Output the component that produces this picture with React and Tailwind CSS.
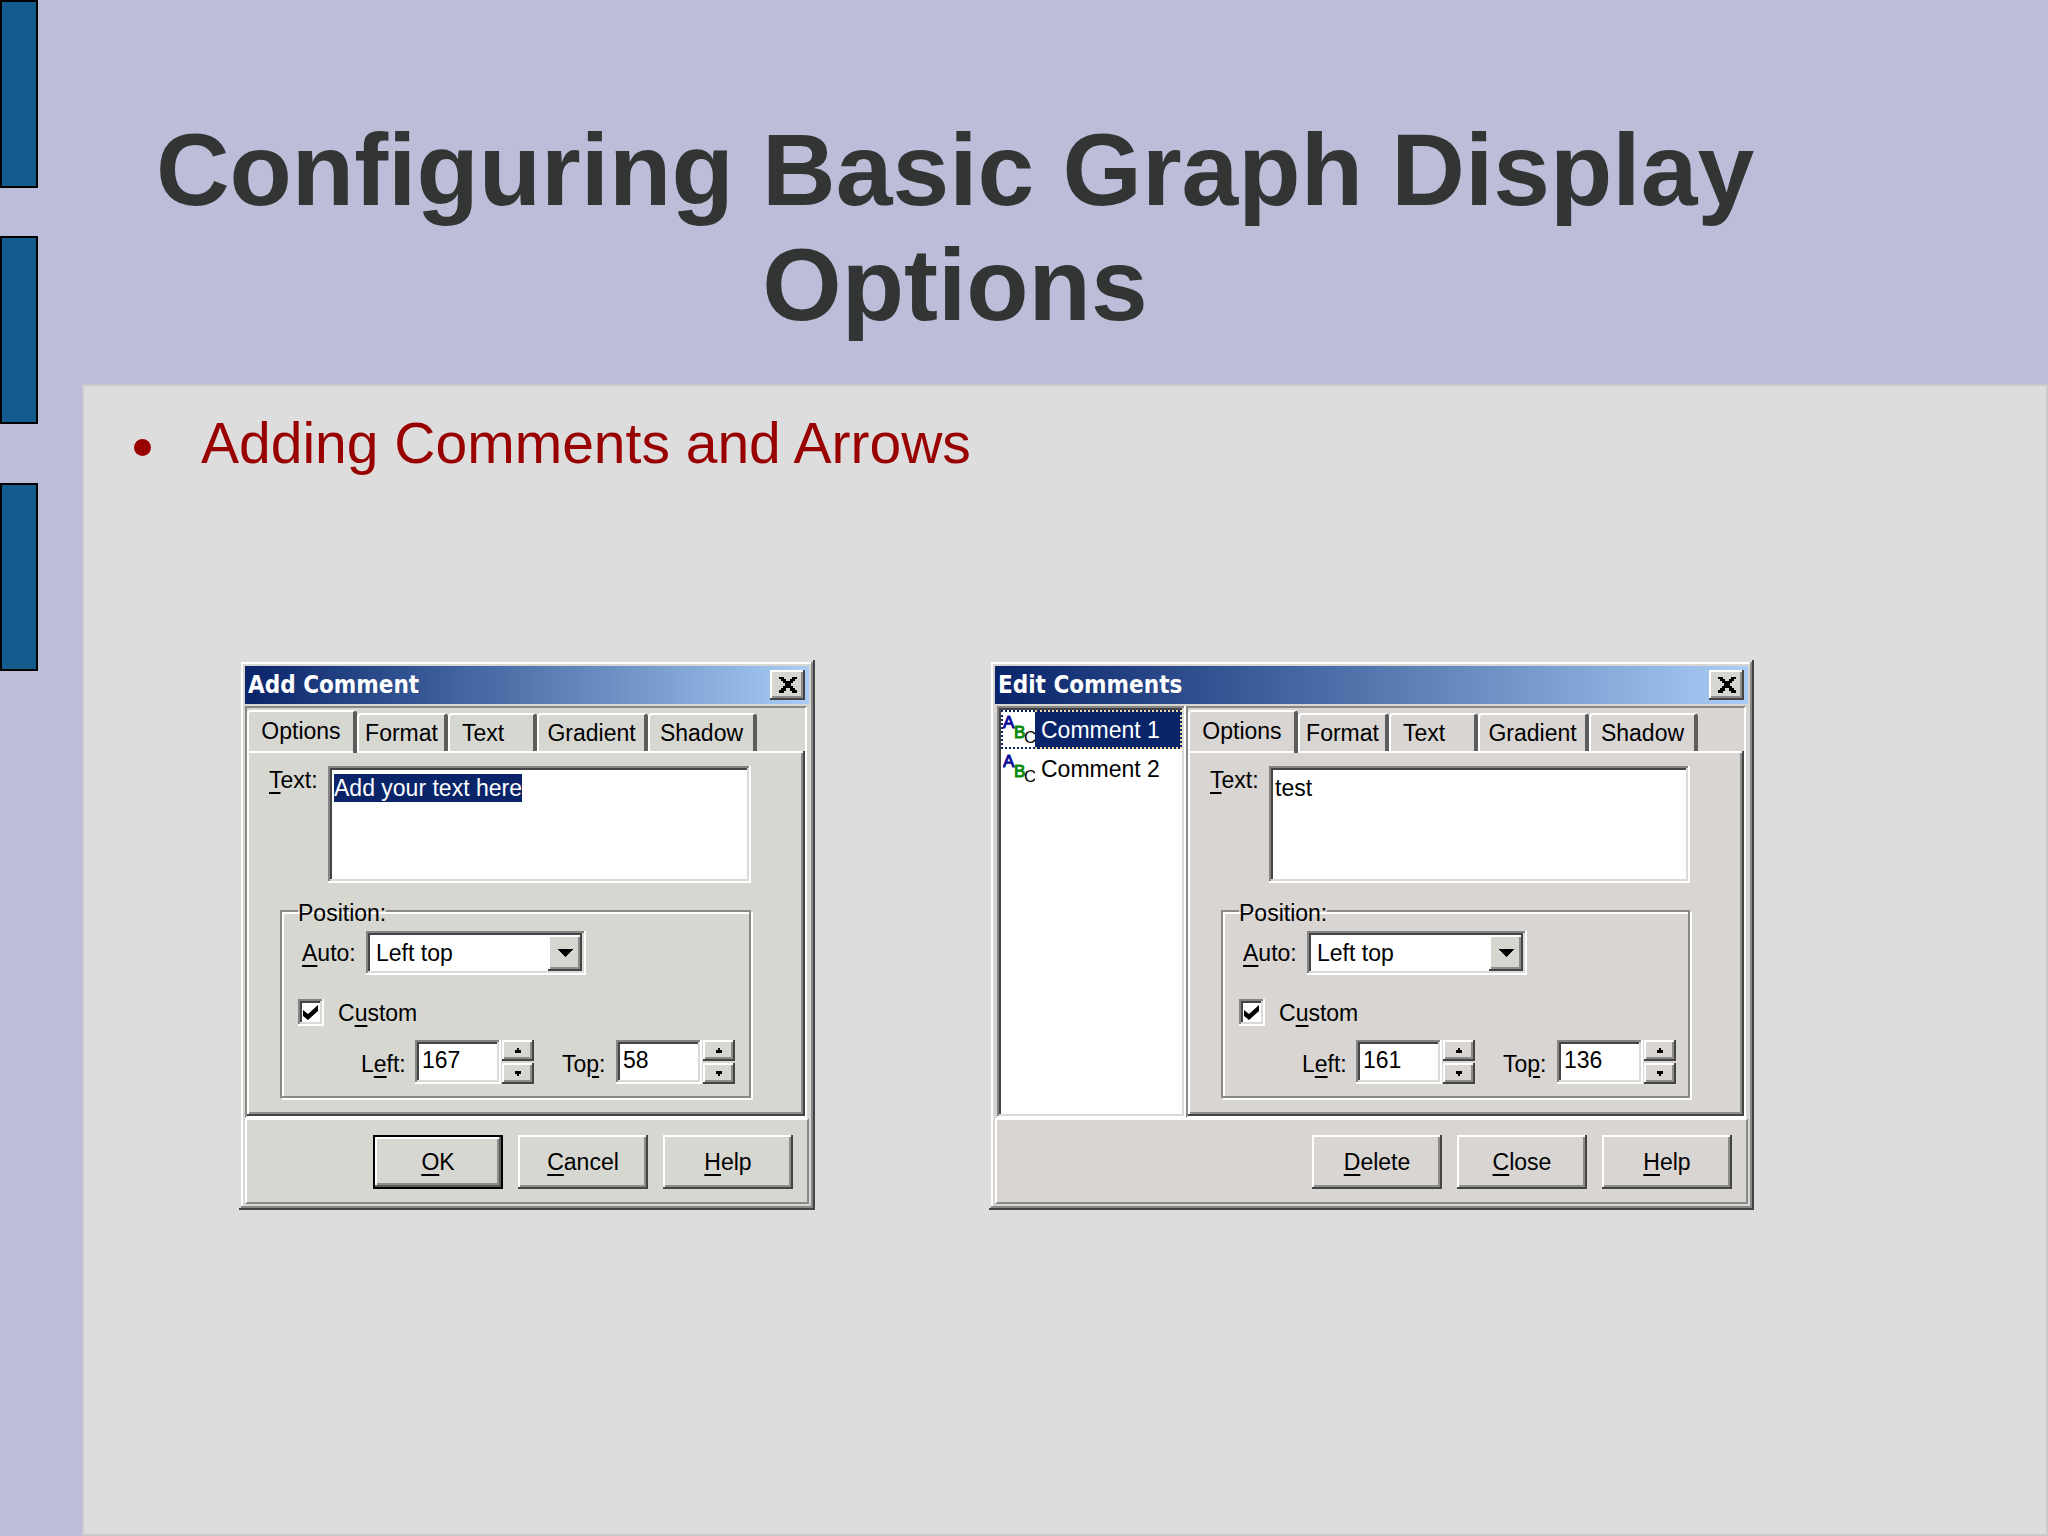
import { useEffect, useRef, useState } from "react";

const TABS = [
  { id: "options", label: "Options", className: "w-[110px] justify-center" },
  { id: "format", label: "Format", className: "w-[91px] justify-center" },
  { id: "text", label: "Text", className: "w-[89px] pl-3" },
  { id: "gradient", label: "Gradient", className: "w-[111px] justify-center" },
  { id: "shadow", label: "Shadow", className: "w-[109px] justify-center" },
];

// Classic bevels: two 2px rings each
const FRAME = "shadow-[inset_-2px_-2px_#444444,inset_2px_2px_#dcdcdc,inset_-4px_-4px_#888888,inset_4px_4px_#ffffff]";
const RAISED = "shadow-[inset_-2px_-2px_#444444,inset_2px_2px_#ffffff,inset_-4px_-4px_#8c8c8a]";
const SUNKEN = "shadow-[inset_-2px_-2px_#ffffff,inset_2px_2px_#848484,inset_-4px_-4px_#dadad8,inset_4px_4px_#444444]";

function Key({ children }) {
  return <span className="underline decoration-2 underline-offset-4">{children}</span>;
}

function TitleBar({ title }) {
  return (
    <header className="flex h-[38px] items-center justify-between bg-linear-to-r from-[#0a246a] to-[#a9cdf5] pr-1 pl-[3px]">
      <h2 className="font-['DejaVu_Sans_Condensed','DejaVu_Sans',sans-serif] text-[24px] leading-7 font-bold text-white">
        {title}
      </h2>
      <button
        type="button"
        aria-label="Close window"
        className={`flex h-[30px] w-[35px] items-center justify-center bg-[#d6d5d0] ${RAISED}`}
      >
        <svg width="18" height="16" viewBox="0 0 18 16" shapeRendering="crispEdges">
          <path
            d="M0 0h5v2h2v2h4v-2h2v-2h5v2h-2v2h-2v2h-2v3h2v2h2v2h2v3h-5v-2h-2v-3h-4v3h-2v2h-5v-3h2v-2h2v-2h2v-3h-2v-2h-2v-2h-2z"
            fill="#000"
          />
        </svg>
      </button>
    </header>
  );
}

function Tabs({ active, onChange }) {
  return (
    <div className="mt-[2px] flex h-[41px] items-end" role="tablist">
      {TABS.map((tab) => (
        <button
          key={tab.id}
          type="button"
          role="tab"
          aria-selected={active === tab.id}
          onClick={() => onChange(tab.id)}
          className={`flex shrink-0 items-center rounded-t-[4px] border-t-2 border-r-4 border-l-2 border-t-white border-r-[#5c5c5a] border-l-white ${tab.className} ${
            active === tab.id ? "relative -mb-[2px] h-[43px] bg-inherit pb-1" : "h-[38px]"
          }`}
        >
          {tab.label}
        </button>
      ))}
    </div>
  );
}

function Spinner({ id, label, value }) {
  const [number, setNumber] = useState(value);

  return (
    <div className="flex h-11 items-start">
      <label htmlFor={id} className="w-[54px] pt-[10px] leading-7">
        {label}
      </label>
      <input
        id={id}
        type="text"
        value={number}
        onChange={(event) => setNumber(Number(event.target.value) || 0)}
        className={`h-11 w-[86px] bg-white pb-1 pl-[7px] outline-none ${SUNKEN}`}
      />
      <div className="ml-[1px] flex flex-col gap-[2px]">
        <button
          type="button"
          aria-label="Increase"
          onClick={() => setNumber(number + 1)}
          className={`flex h-[21px] w-8 items-center justify-center ${RAISED}`}
        >
          <svg width="8" height="5" viewBox="0 0 8 5">
            <path d="M3 0h2v2h2v3h-6v-3h2z" fill="#000" />
          </svg>
        </button>
        <button
          type="button"
          aria-label="Decrease"
          onClick={() => setNumber(number - 1)}
          className={`flex h-[21px] w-8 items-center justify-center ${RAISED}`}
        >
          <svg width="8" height="5" viewBox="0 0 8 5">
            <path d="M1 0h6v3h-2v2h-2v-2h-2z" fill="#000" />
          </svg>
        </button>
      </div>
    </div>
  );
}

function CommentForm({ id, text, left, top, selectText }) {
  const [activeTab, setActiveTab] = useState("options");
  const [value, setValue] = useState(text);
  const [custom, setCustom] = useState(true);
  const textRef = useRef(null);

  useEffect(() => {
    if (selectText) {
      textRef.current.focus();
      textRef.current.select();
    }
  }, [selectText]);

  return (
    <div className="mr-[2px] min-w-0 flex-1 border-2 border-t-[#8a8885] border-r-white border-b-white border-l-[#8a8885] bg-inherit">
      <Tabs active={activeTab} onChange={setActiveTab} />

      <div className={`h-[365px] pt-[15px] pr-[54px] pl-[22px] ${RAISED}`}>
        <div className="flex">
          <label htmlFor={`${id}-text`} className="w-[59px] leading-7">
            <Key>T</Key>ext:
          </label>
          <textarea
            id={`${id}-text`}
            ref={textRef}
            value={value}
            onChange={(event) => setValue(event.target.value)}
            className={`h-[117px] min-w-0 flex-1 resize-none bg-white py-[8px] pl-[6px] leading-7 outline-none selection:bg-[#0a246a] selection:text-white ${SUNKEN}`}
          />
        </div>

        <fieldset className="mt-[14px] ml-[11px] border-2 border-[#8a8a88] pb-3 shadow-[inset_2px_2px_#ffffff,2px_2px_#ffffff]">
          <legend className="ml-4 pt-1 leading-6">Position:</legend>

          <div className="mt-[6px] flex h-11 items-center pl-5">
            <label htmlFor={`${id}-auto`} className="w-[64px]">
              <Key>A</Key>uto:
            </label>
            <div className="relative">
              <select
                id={`${id}-auto`}
                className={`h-11 w-[220px] appearance-none bg-white pl-[10px] outline-none ${SUNKEN}`}
              >
                <option>Left top</option>
                <option>Right top</option>
                <option>Left bottom</option>
                <option>Right bottom</option>
              </select>
              <span
                className={`pointer-events-none absolute top-1 right-1 flex h-9 w-[34px] items-center justify-center bg-[#d6d5d0] ${RAISED}`}
              >
                <svg width="16" height="8" viewBox="0 0 16 8" shapeRendering="crispEdges">
                  <path d="M0 0h16l-8 8z" fill="#000" />
                </svg>
              </span>
            </div>
          </div>

          <div className="mt-6 flex h-[27px] items-center pl-4">
            <span className="relative flex">
              <input
                id={`${id}-custom`}
                type="checkbox"
                checked={custom}
                onChange={(event) => setCustom(event.target.checked)}
                className={`h-[27px] w-[26px] appearance-none bg-white ${SUNKEN}`}
              />
              {custom && (
                <svg className="pointer-events-none absolute top-[6px] left-[5px]" width="16" height="15" viewBox="0 0 16 15">
                  <path d="M0 5l5 4l10-9v6l-10 9l-5-4z" fill="#000" />
                </svg>
              )}
            </span>
            <label htmlFor={`${id}-custom`} className="pl-[14px]">
              C<Key>u</Key>stom
            </label>
          </div>

          <div className="mt-[14px] flex gap-7 pl-[79px]">
            <Spinner id={`${id}-left`} label={<>L<Key>e</Key>ft:</>} value={left} />
            <Spinner id={`${id}-top`} label={<>To<Key>p</Key>:</>} value={top} />
          </div>
        </fieldset>
      </div>
    </div>
  );
}

function Footer({ buttons }) {
  return (
    <footer className="flex h-[86px] justify-end gap-[15px] border-2 border-t-white border-r-[#8a8a88] border-b-[#8a8a88] border-l-white pt-[15px] pr-[14px]">
      {buttons.map((button) => (
        <button
          key={button.label}
          type="button"
          className={`h-[54px] w-[130px] ${
            button.primary
              ? "border-2 border-black shadow-[inset_-2px_-2px_#5c5c5a,inset_2px_2px_#ffffff,inset_-4px_-4px_#8c8c8a]"
              : RAISED
          }`}
        >
          <Key>{button.label[0]}</Key>
          {button.label.slice(1)}
        </button>
      ))}
    </footer>
  );
}

function AbcIcon() {
  return (
    <svg width="32" height="34" viewBox="0 0 32 34" className="text-[17px]">
      <text x="0" y="15" fill="#0a0a9a" stroke="#0a0a9a">A</text>
      <text x="11" y="25" fill="#0a8a0a" stroke="#0a8a0a">B</text>
      <text x="21" y="30" fill="#000000">C</text>
    </svg>
  );
}

function CommentList({ items }) {
  const [selected, setSelected] = useState(0);

  return (
    <ul role="listbox" aria-label="Comments" className={`ml-[2px] w-[189px] shrink-0 bg-white p-1 ${SUNKEN}`}>
      {items.map((item, index) => {
        const isSelected = index === selected;

        return (
          <li
            key={item}
            role="option"
            aria-selected={isSelected}
            onClick={() => setSelected(index)}
            className="flex h-[39px] cursor-default"
          >
            <span
              className={`flex w-[34px] items-center justify-center border-y-2 border-l-2 border-dotted ${
                isSelected ? "border-[#0a246a]" : "border-transparent"
              }`}
            >
              <AbcIcon />
            </span>
            <span
              className={`flex flex-1 items-center border-y-2 border-r-2 border-dotted pl-[6px] whitespace-nowrap ${
                isSelected ? "border-[#f5dba0] bg-[#0a246a] text-white" : "border-transparent"
              }`}
            >
              {item}
            </span>
          </li>
        );
      })}
    </ul>
  );
}

function Dialog({ title, className, buttons, children }) {
  return (
    <section
      aria-label={title}
      className={`shrink-0 p-[6px] text-[23px] leading-7 text-black ${FRAME} ${className}`}
    >
      <TitleBar title={title} />
      <div className="mt-[2px] flex bg-inherit">{children}</div>
      <Footer buttons={buttons} />
    </section>
  );
}

function App() {
  return (
    <main className="flex min-h-screen bg-[#bcbdd8] font-['Liberation_Sans',Arial,sans-serif]">
      <aside className="w-[82px] shrink-0">
        <div className="h-[188px] w-[38px] border-2 border-black bg-[#135c8d]" />
        <div className="mt-12 h-[188px] w-[38px] border-2 border-black bg-[#135c8d]" />
        <div className="mt-[59px] h-[188px] w-[38px] border-2 border-black bg-[#135c8d]" />
      </aside>

      <div className="flex min-w-0 flex-1 flex-col">
        <header className="h-[384px] pt-[113px] pr-[280px] pl-[60px]">
          <h1 className="text-center text-[102px] leading-[115px] font-bold text-[#333535]">
            Configuring Basic Graph Display Options
          </h1>
        </header>

        <div className="flex-1 border-2 border-[#cbcbcf] bg-[#dddddd] pt-6">
          <ul>
            <li className="flex items-center gap-[50px] pl-[50px] text-[57px] leading-[66px] text-[#990000]">
              <span className="mt-2 size-[17px] rounded-full bg-[#990000]" />
              Adding Comments and Arrows
            </li>
          </ul>

          <div className="mt-[184px] flex gap-[174px] pl-[155px]">
            <Dialog
              title="Add Comment"
              className="w-[576px] bg-[#d6d7d1]"
              buttons={[{ label: "OK", primary: true }, { label: "Cancel" }, { label: "Help" }]}
            >
              <CommentForm id="add" text="Add your text here" left={167} top={58} selectText />
            </Dialog>

            <Dialog
              title="Edit Comments"
              className="w-[765px] bg-[#d8d5d2]"
              buttons={[{ label: "Delete" }, { label: "Close" }, { label: "Help" }]}
            >
              <CommentList items={["Comment 1", "Comment 2"]} />
              <CommentForm id="edit" text="test" left={161} top={136} />
            </Dialog>
          </div>
        </div>
      </div>
    </main>
  );
}

export default App;
